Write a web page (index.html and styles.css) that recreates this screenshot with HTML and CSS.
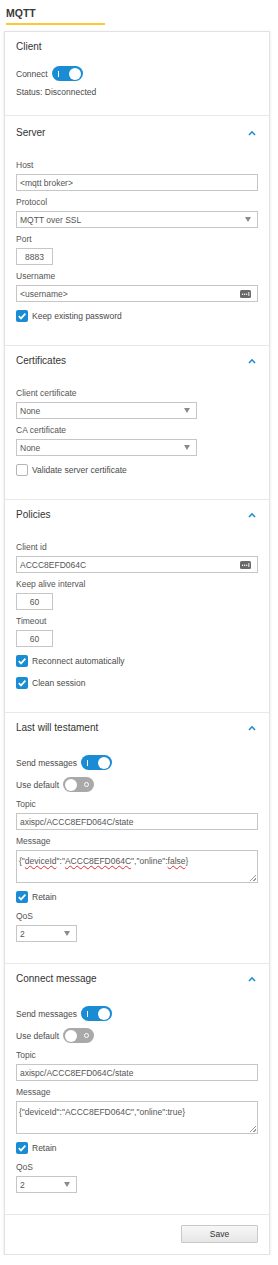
FILE: index.html
```html
<!DOCTYPE html>
<html lang="en">
<head>
<meta charset="utf-8">
<title>MQTT</title>
<link rel="stylesheet" href="styles.css">
</head>
<body>
<div class="page">
  <div class="tab"><span class="tab-label">MQTT</span></div>
  <div class="card">

    <section class="section section-client">
      <h2 class="section-title">Client</h2>
      <div class="row">
        <span class="row-label">Connect</span>
        <span class="toggle toggle-on"><span class="toggle-mark"></span><span class="toggle-knob"></span></span>
      </div>
      <div class="status">Status: Disconnected</div>
    </section>

    <section class="section section-server">
      <div class="section-head">
        <h2 class="section-title">Server</h2>
        <svg class="chevron" width="8" height="6" viewBox="0 0 8 6"><polyline points="1,5 4,1.8 7,5" fill="none" stroke="#1a8cd3" stroke-width="1.6"/></svg>
      </div>
      <div class="section-body">
        <div class="field">
          <label class="field-label">Host</label>
          <div class="input w-full"><span class="input-text">&lt;mqtt broker&gt;</span></div>
        </div>
        <div class="field">
          <label class="field-label">Protocol</label>
          <div class="select w-full"><span class="input-text">MQTT over SSL</span><span class="arrow"></span></div>
        </div>
        <div class="field">
          <label class="field-label">Port</label>
          <div class="input w-small centered"><span class="input-text">8883</span></div>
        </div>
        <div class="field">
          <label class="field-label">Username</label>
          <div class="input w-full"><span class="input-text">&lt;username&gt;</span>
            <svg class="key" width="11" height="8" viewBox="0 0 11 8"><rect x="0" y="0" width="11" height="8" rx="1.5" fill="#6a6a6a"/><circle cx="2.6" cy="4.3" r="0.7" fill="#fff"/><circle cx="4.6" cy="4.3" r="0.7" fill="#fff"/><circle cx="6.6" cy="4.3" r="0.7" fill="#fff"/><rect x="8.4" y="2" width="0.9" height="4" fill="#fff"/></svg>
          </div>
        </div>
        <div class="row">
          <span class="check check-on"><svg width="12" height="12" viewBox="0 0 12 12"><polyline points="2.8,6.2 5,8.4 9.4,3.6" fill="none" stroke="#fff" stroke-width="1.7"/></svg></span>
          <span class="row-label">Keep existing password</span>
        </div>
      </div>
    </section>

    <section class="section">
      <div class="section-head">
        <h2 class="section-title">Certificates</h2>
        <svg class="chevron" width="8" height="6" viewBox="0 0 8 6"><polyline points="1,5 4,1.8 7,5" fill="none" stroke="#1a8cd3" stroke-width="1.6"/></svg>
      </div>
      <div class="section-body">
        <div class="field">
          <label class="field-label">Client certificate</label>
          <div class="select w-cert"><span class="input-text">None</span><span class="arrow"></span></div>
        </div>
        <div class="field">
          <label class="field-label">CA certificate</label>
          <div class="select w-cert"><span class="input-text">None</span><span class="arrow"></span></div>
        </div>
        <div class="row">
          <span class="check"></span>
          <span class="row-label">Validate server certificate</span>
        </div>
      </div>
    </section>

    <section class="section">
      <div class="section-head">
        <h2 class="section-title">Policies</h2>
        <svg class="chevron" width="8" height="6" viewBox="0 0 8 6"><polyline points="1,5 4,1.8 7,5" fill="none" stroke="#1a8cd3" stroke-width="1.6"/></svg>
      </div>
      <div class="section-body">
        <div class="field">
          <label class="field-label">Client id</label>
          <div class="input w-full"><span class="input-text">ACCC8EFD064C</span>
            <svg class="key" width="11" height="8" viewBox="0 0 11 8"><rect x="0" y="0" width="11" height="8" rx="1.5" fill="#6a6a6a"/><circle cx="2.6" cy="4.3" r="0.7" fill="#fff"/><circle cx="4.6" cy="4.3" r="0.7" fill="#fff"/><circle cx="6.6" cy="4.3" r="0.7" fill="#fff"/><rect x="8.4" y="2" width="0.9" height="4" fill="#fff"/></svg>
          </div>
        </div>
        <div class="field">
          <label class="field-label">Keep alive interval</label>
          <div class="input w-small centered"><span class="input-text">60</span></div>
        </div>
        <div class="field">
          <label class="field-label">Timeout</label>
          <div class="input w-small centered"><span class="input-text">60</span></div>
        </div>
        <div class="row">
          <span class="check check-on"><svg width="12" height="12" viewBox="0 0 12 12"><polyline points="2.8,6.2 5,8.4 9.4,3.6" fill="none" stroke="#fff" stroke-width="1.7"/></svg></span>
          <span class="row-label">Reconnect automatically</span>
        </div>
        <div class="row">
          <span class="check check-on"><svg width="12" height="12" viewBox="0 0 12 12"><polyline points="2.8,6.2 5,8.4 9.4,3.6" fill="none" stroke="#fff" stroke-width="1.7"/></svg></span>
          <span class="row-label">Clean session</span>
        </div>
      </div>
    </section>

    <section class="section">
      <div class="section-head">
        <h2 class="section-title">Last will testament</h2>
        <svg class="chevron" width="8" height="6" viewBox="0 0 8 6"><polyline points="1,5 4,1.8 7,5" fill="none" stroke="#1a8cd3" stroke-width="1.6"/></svg>
      </div>
      <div class="section-body">
        <div class="row">
          <span class="row-label">Send messages</span>
          <span class="toggle toggle-on"><span class="toggle-mark"></span><span class="toggle-knob"></span></span>
        </div>
        <div class="row">
          <span class="row-label">Use default</span>
          <span class="toggle toggle-off"><span class="toggle-knob"></span><span class="toggle-ring"></span></span>
        </div>
        <div class="field">
          <label class="field-label">Topic</label>
          <div class="input w-full"><span class="input-text">axispc/ACCC8EFD064C/state</span></div>
        </div>
        <div class="field">
          <label class="field-label">Message</label>
          <div class="textarea w-full">{"<span class="spell">deviceId</span>":"<span class="spell">ACCC8EFD064C</span>","online":<span class="spell">false</span>}</div>
        </div>
        <div class="row">
          <span class="check check-on"><svg width="12" height="12" viewBox="0 0 12 12"><polyline points="2.8,6.2 5,8.4 9.4,3.6" fill="none" stroke="#fff" stroke-width="1.7"/></svg></span>
          <span class="row-label">Retain</span>
        </div>
        <div class="field">
          <label class="field-label">QoS</label>
          <div class="select w-qos"><span class="input-text">2</span><span class="arrow"></span></div>
        </div>
      </div>
    </section>

    <section class="section">
      <div class="section-head">
        <h2 class="section-title">Connect message</h2>
        <svg class="chevron" width="8" height="6" viewBox="0 0 8 6"><polyline points="1,5 4,1.8 7,5" fill="none" stroke="#1a8cd3" stroke-width="1.6"/></svg>
      </div>
      <div class="section-body">
        <div class="row">
          <span class="row-label">Send messages</span>
          <span class="toggle toggle-on"><span class="toggle-mark"></span><span class="toggle-knob"></span></span>
        </div>
        <div class="row">
          <span class="row-label">Use default</span>
          <span class="toggle toggle-off"><span class="toggle-knob"></span><span class="toggle-ring"></span></span>
        </div>
        <div class="field">
          <label class="field-label">Topic</label>
          <div class="input w-full"><span class="input-text">axispc/ACCC8EFD064C/state</span></div>
        </div>
        <div class="field">
          <label class="field-label">Message</label>
          <div class="textarea w-full">{"deviceId":"ACCC8EFD064C","online":true}</div>
        </div>
        <div class="row">
          <span class="check check-on"><svg width="12" height="12" viewBox="0 0 12 12"><polyline points="2.8,6.2 5,8.4 9.4,3.6" fill="none" stroke="#fff" stroke-width="1.7"/></svg></span>
          <span class="row-label">Retain</span>
        </div>
        <div class="field">
          <label class="field-label">QoS</label>
          <div class="select w-qos"><span class="input-text">2</span><span class="arrow"></span></div>
        </div>
      </div>
    </section>

    <div class="footer">
      <button class="btn" type="button">Save</button>
    </div>
  </div>
</div>
</body>
</html>
```
FILE: styles.css
```css
html, body {
  margin: 0;
  padding: 0;
  background: #ffffff;
}

body {
  font-family: "Liberation Sans", Arial, sans-serif;
  font-size: 8.5px;
  color: #555555;
}

.page {
  width: 278px;
}

.tab {
  padding: 7px 0 0 6px;
}

.tab-label {
  display: block;
  width: 99px;
  font-size: 10.5px;
  font-weight: bold;
  line-height: 12px;
  color: #3a3a3a;
  padding-bottom: 4px;
  border-bottom: 2px solid #fdc932;
}

.card {
  margin: 6px 8px 0 4px;
  border: 1px solid #e2e2e2;
  box-shadow: 0 1px 3px rgba(0, 0, 0, 0.10);
  background: #ffffff;
}

.section {
  padding: 8px 11px 21px;
}

.section + .section {
  border-top: 1px solid #e8e8e8;
}

.section-client {
  padding-bottom: 17px;
}

.section-server {
  padding-top: 10px;
}

.section-title {
  margin: 0;
  font-size: 10px;
  font-weight: normal;
  line-height: 13px;
  color: #333333;
}

.section-client .section-title {
  margin-bottom: 12px;
}

.section-head {
  display: flex;
  align-items: center;
  justify-content: space-between;
  margin-bottom: 20px;
}

.chevron {
  display: block;
  margin-right: 2px;
}

.section-body {
  display: flex;
  flex-direction: column;
  gap: 5px;
}

.row {
  display: flex;
  align-items: center;
  gap: 4px;
  height: 17px;
}

.row-label {
  line-height: 12px;
  color: #4a4a4a;
}

.status {
  margin-top: 4px;
  line-height: 12px;
  color: #4a4a4a;
}

.field {
  display: flex;
  flex-direction: column;
  align-items: flex-start;
}

.field-label {
  display: block;
  line-height: 12px;
  margin-bottom: 3px;
  color: #555555;
}

.input,
.select {
  box-sizing: border-box;
  height: 17px;
  border: 1px solid #c6c6c6;
  background: #ffffff;
  display: flex;
  align-items: center;
  padding: 0 3px;
  color: #555555;
}

.input-text {
  flex: 1;
  line-height: 12px;
  white-space: nowrap;
}

.centered .input-text {
  text-align: center;
}

.w-full { width: 100%; }
.w-cert { width: 181px; }
.w-small { width: 37px; }
.w-qos { width: 61px; }

.key {
  display: block;
  margin-right: 3px;
  flex: none;
}

.arrow {
  flex: none;
  width: 0;
  height: 0;
  border-left: 3.5px solid transparent;
  border-right: 3.5px solid transparent;
  border-top: 5px solid #8a8a8a;
  margin-right: 3px;
}

.textarea {
  position: relative;
  box-sizing: border-box;
  height: 33px;
  border: 1px solid #c6c6c6;
  padding: 4px 2px 0;
  line-height: 12px;
  color: #555555;
  white-space: nowrap;
}

.textarea::after {
  content: "";
  position: absolute;
  right: 1px;
  bottom: 1px;
  width: 6px;
  height: 6px;
  background: linear-gradient(135deg,
    transparent 0, transparent 45%,
    #9a9a9a 45%, #9a9a9a 55%,
    transparent 55%, transparent 75%,
    #9a9a9a 75%, #9a9a9a 85%,
    transparent 85%);
}

.spell {
  text-decoration: underline wavy #e03030;
  text-decoration-thickness: 1px;
  text-underline-offset: 1px;
}

.check {
  box-sizing: border-box;
  flex: none;
  width: 12px;
  height: 12px;
  border-radius: 2px;
  border: 1px solid #b5b5b5;
  background: #ffffff;
}

.check-on {
  border: none;
  background: #1a8cd3;
}

.check svg {
  display: block;
}

.toggle {
  box-sizing: border-box;
  flex: none;
  display: inline-flex;
  align-items: center;
  justify-content: space-between;
  width: 31px;
  height: 15px;
  border-radius: 8px;
  padding: 0 1.5px;
}

.toggle-on {
  background: #1a8cd3;
}

.toggle-off {
  background: #a9a9a9;
}

.toggle-knob {
  width: 12px;
  height: 12px;
  border-radius: 50%;
  background: #ffffff;
}

.toggle-mark {
  width: 1.5px;
  height: 6px;
  background: #ffffff;
  margin-left: 4.5px;
}

.toggle-ring {
  box-sizing: border-box;
  width: 5px;
  height: 5px;
  border-radius: 50%;
  border: 1.3px solid #ffffff;
  margin-right: 3.5px;
}

.footer {
  border-top: 1px solid #e8e8e8;
  padding: 10px 11px 11px;
  display: flex;
  justify-content: flex-end;
}

.btn {
  box-sizing: border-box;
  width: 77px;
  height: 18px;
  margin: 0;
  padding: 0;
  border: 1px solid #c9c9c9;
  border-radius: 1px;
  background: linear-gradient(#f7f7f7, #e6e6e6);
  font-family: "Liberation Sans", Arial, sans-serif;
  font-size: 8.5px;
  color: #333333;
}
```
